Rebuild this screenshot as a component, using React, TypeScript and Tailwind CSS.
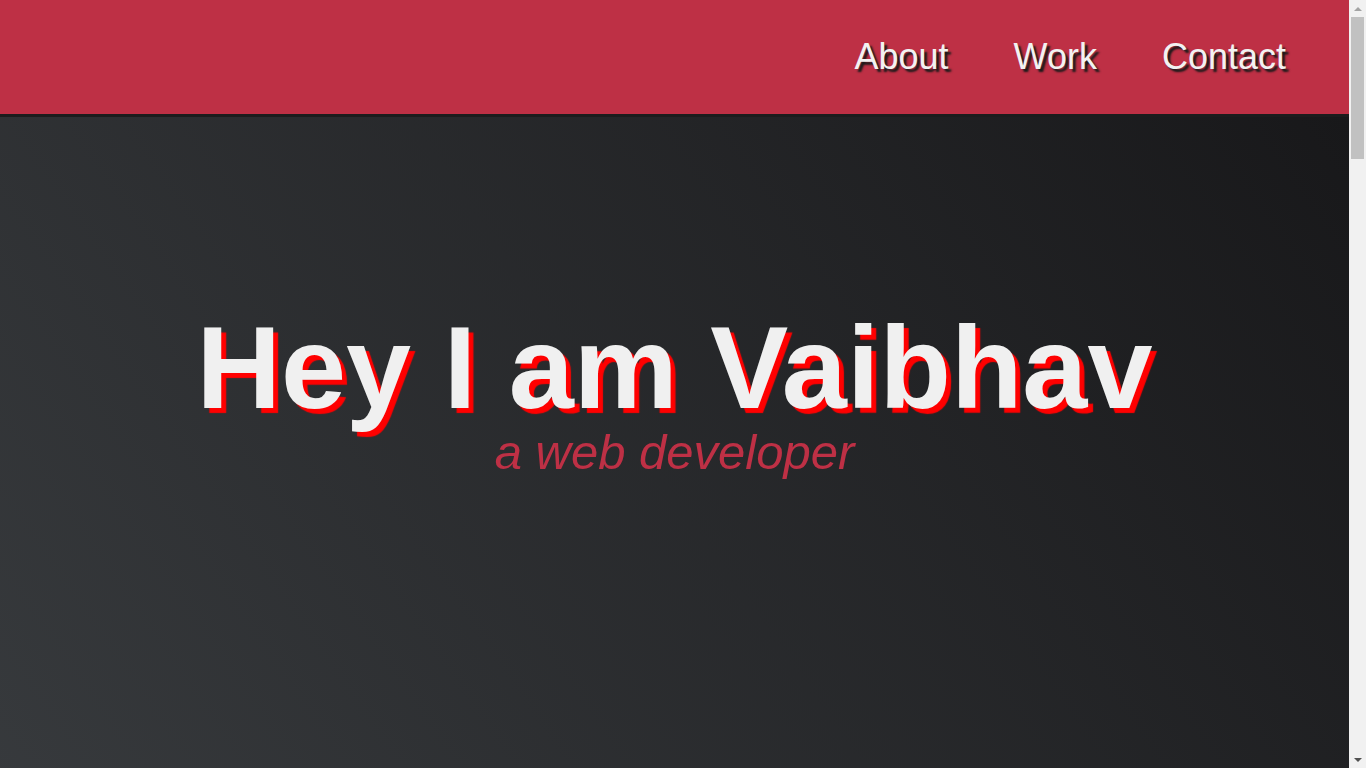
export default function App() {
    const links = ["About", "Work", "Contact"]

    return (
        <div className="min-h-screen bg-[#1d1d1e] pr-[17px] font-['Liberation_Sans',Arial,sans-serif]">
            {/* top bar */}
            <header className="flex h-[117px] items-center justify-end border-b-[3px] border-[#1c1c1d] bg-[#be3045] pr-[63px]">
                <nav className="flex items-center gap-[65px]">
                    {links.map((link) => (
                        <a
                            key={link}
                            href="#"
                            className="text-[36px] text-[#f2f2f2] [text-shadow:3px_3px_2px_#1a1a1a]"
                        >
                            {link}
                        </a>
                    ))}
                </nav>
            </header>

            {/* hero */}
            <section className="flex h-[768px] flex-col items-center bg-[linear-gradient(55deg,#383b3e,#18181a)] pt-[192px]">
                <h1 className="text-[117px] font-bold leading-none text-[#f0f0f0] [text-shadow:5px_5px_1px_#ff0000]">
                    Hey I am Vaibhav
                </h1>
                <p className="mt-[2px] text-[49px] italic leading-none text-[#be3045]">a web developer</p>
            </section>

            <div className="h-[3050px]" />

            {/* window scrollbar as the reference shows it */}
            <div className="fixed right-0 top-0 flex h-screen w-[17px] flex-col items-center bg-[#f1f1f1]">
                <div className="flex h-[17px] w-full items-center justify-center">
                    <div className="h-0 w-0 border-x-[4px] border-b-[4px] border-x-transparent border-b-[#a3a3a3]" />
                </div>
                <div className="h-[142px] w-[13px] bg-[#c1c1c1]" />
                <div className="flex-1" />
                <div className="flex h-[17px] w-full items-center justify-center">
                    <div className="h-0 w-0 border-x-[4px] border-t-[4px] border-x-transparent border-t-[#505050]" />
                </div>
            </div>
        </div>
    )
}
